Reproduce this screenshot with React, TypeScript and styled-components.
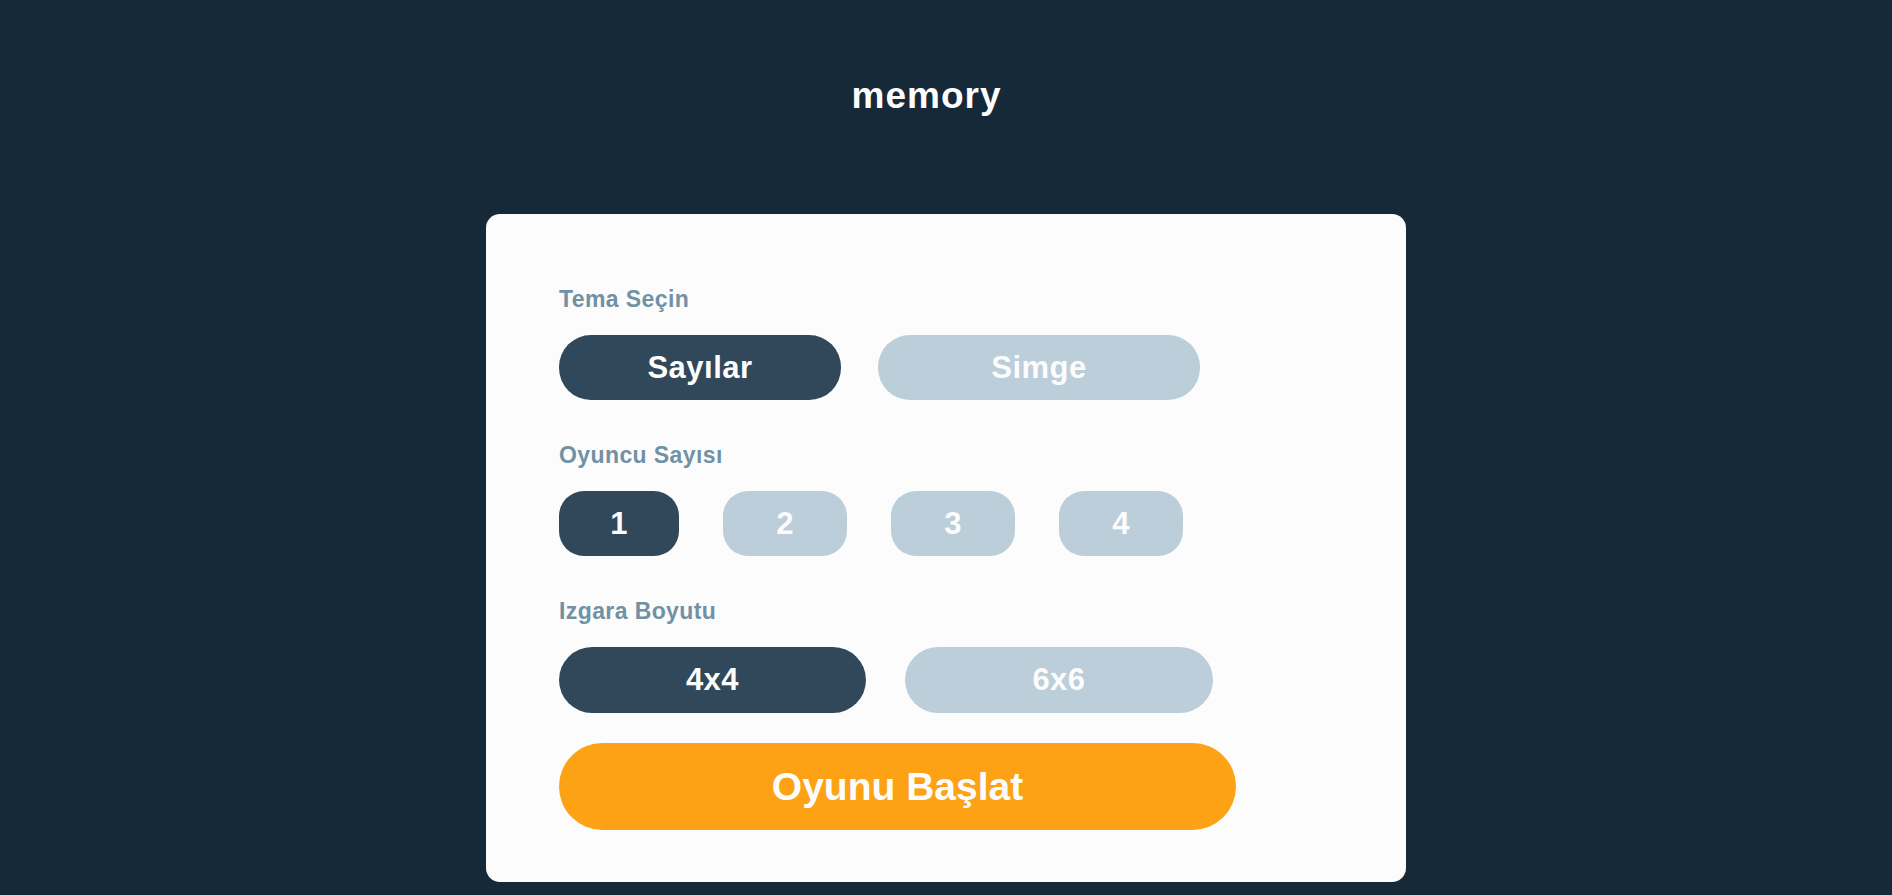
import React, { useState } from "react";
import styled, { createGlobalStyle } from "styled-components";

const GlobalStyle = createGlobalStyle`
  * { box-sizing: border-box; }
  html, body {
    margin: 0;
    padding: 0;
    background: #152938;
    font-family: "Liberation Sans", Arial, sans-serif;
  }
`;

const Page = styled.main`
  min-height: 100vh;
  display: flex;
  flex-direction: column;
  align-items: center;
  padding-top: 77px;
`;

const Title = styled.h1`
  margin: 0 39px 0 0;
  color: #fcfcfc;
  font-size: 37px;
  line-height: 37px;
  font-weight: 700;
  letter-spacing: 1px;
`;

const Card = styled.section`
  margin-top: 100px;
  width: 920px;
  background: #fcfcfc;
  border-radius: 14px;
  padding: 74px 73px 52px;
  display: flex;
  flex-direction: column;
`;

const Label = styled.h2<{ $first?: boolean }>`
  margin: ${(p) => (p.$first ? "0" : "44px")} 0 24px;
  color: #7191a5;
  font-size: 23px;
  line-height: 23px;
  font-weight: 700;
  letter-spacing: 0.4px;
`;

const Row = styled.div<{ $gap: number }>`
  display: flex;
  gap: ${(p) => p.$gap}px;
`;

const Option = styled.button<{ $active: boolean; $w: number; $radius: number }>`
  width: ${(p) => p.$w}px;
  height: 65px;
  border: none;
  border-radius: ${(p) => p.$radius}px;
  background: ${(p) => (p.$active ? "#304859" : "#bcced9")};
  color: #fcfcfc;
  font-family: "Liberation Sans", Arial, sans-serif;
  font-size: 31px;
  font-weight: 700;
  letter-spacing: 0.5px;
  cursor: pointer;
  display: flex;
  align-items: center;
  justify-content: center;
  padding: 0;
`;

const GridOption = styled(Option)`
  height: 66px;
`;

const Start = styled.button`
  margin-top: 30px;
  width: 677px;
  height: 87px;
  border: none;
  border-radius: 44px;
  background: #fda214;
  color: #fcfcfc;
  font-family: "Liberation Sans", Arial, sans-serif;
  font-size: 39px;
  font-weight: 700;
  cursor: pointer;
  display: flex;
  align-items: center;
  justify-content: center;
  padding: 0;
`;

const themes = [
  { id: "numbers", label: "Sayılar", w: 282 },
  { id: "icons", label: "Simge", w: 322 },
];

const players = [
  { n: 1, w: 120 },
  { n: 2, w: 124 },
  { n: 3, w: 124 },
  { n: 4, w: 124 },
];

const grids = [
  { id: "4", label: "4x4", w: 307 },
  { id: "6", label: "6x6", w: 308 },
];

export default function App() {
  const [theme, setTheme] = useState("numbers");
  const [count, setCount] = useState(1);
  const [grid, setGrid] = useState("4");

  return (
    <>
      <GlobalStyle />
      <Page>
        <Title>memory</Title>
        <Card>
          <Label $first>Tema Seçin</Label>
          <Row $gap={37}>
            {themes.map((t) => (
              <Option
                key={t.id}
                $active={theme === t.id}
                $w={t.w}
                $radius={32}
                onClick={() => setTheme(t.id)}
              >
                {t.label}
              </Option>
            ))}
          </Row>

          <Label>Oyuncu Sayısı</Label>
          <Row $gap={44}>
            {players.map((p) => (
              <Option
                key={p.n}
                $active={count === p.n}
                $w={p.w}
                $radius={25}
                onClick={() => setCount(p.n)}
              >
                {p.n}
              </Option>
            ))}
          </Row>

          <Label>Izgara Boyutu</Label>
          <Row $gap={39}>
            {grids.map((g) => (
              <GridOption
                key={g.id}
                $active={grid === g.id}
                $w={g.w}
                $radius={33}
                onClick={() => setGrid(g.id)}
              >
                {g.label}
              </GridOption>
            ))}
          </Row>

          <Start>Oyunu Başlat</Start>
        </Card>
      </Page>
    </>
  );
}
